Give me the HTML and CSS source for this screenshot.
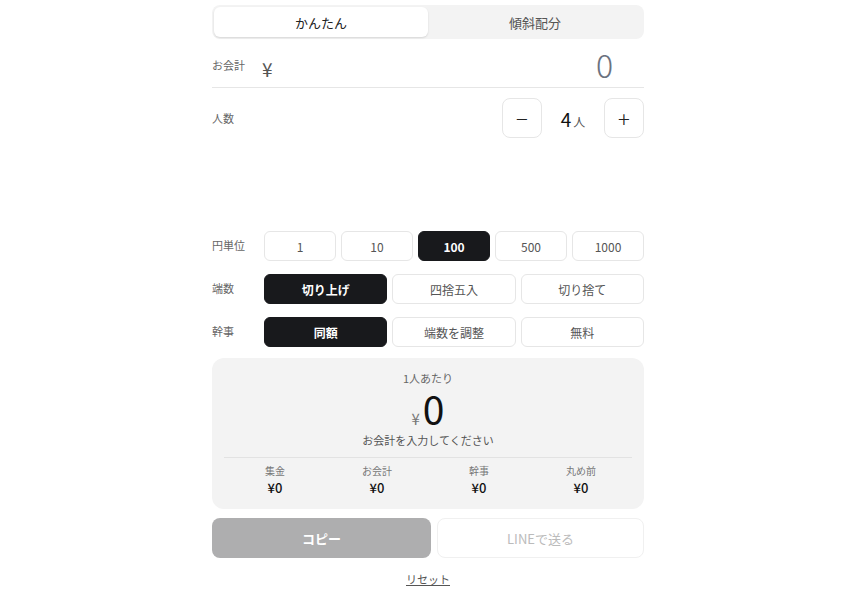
FILE: index.html
```html
<!DOCTYPE html>
<html lang="ja">
<head>
<meta charset="utf-8">
<title>割り勘</title>
<link rel="stylesheet" href="styles.css">
</head>
<body>
<main class="app">
  <div class="tabs">
    <button class="tab tab-active">かんたん</button>
    <button class="tab">傾斜配分</button>
  </div>

  <div class="amount-row">
    <span class="label">お会計</span>
    <span class="yen">¥</span>
    <span class="amount">0</span>
  </div>

  <div class="people-row">
    <span class="label">人数</span>
    <div class="stepper">
      <button class="step-btn">−</button>
      <span class="count"><span class="count-num">4</span><span class="count-unit">人</span></span>
      <button class="step-btn">+</button>
    </div>
  </div>

  <div class="options">
    <div class="opt-row">
      <span class="label">円単位</span>
      <div class="opt-group five">
        <button class="opt">1</button>
        <button class="opt">10</button>
        <button class="opt opt-on">100</button>
        <button class="opt">500</button>
        <button class="opt">1000</button>
      </div>
    </div>
    <div class="opt-row">
      <span class="label">端数</span>
      <div class="opt-group three">
        <button class="opt opt-on">切り上げ</button>
        <button class="opt">四捨五入</button>
        <button class="opt">切り捨て</button>
      </div>
    </div>
    <div class="opt-row">
      <span class="label">幹事</span>
      <div class="opt-group three">
        <button class="opt opt-on">同額</button>
        <button class="opt">端数を調整</button>
        <button class="opt">無料</button>
      </div>
    </div>
  </div>

  <section class="result">
    <div class="per-label">1人あたり</div>
    <div class="per-amount"><span class="per-yen">¥</span><span class="per-num">0</span></div>
    <div class="per-note">お会計を入力してください</div>
    <div class="stats">
      <div class="stat"><div class="stat-label">集金</div><div class="stat-val">¥0</div></div>
      <div class="stat"><div class="stat-label">お会計</div><div class="stat-val">¥0</div></div>
      <div class="stat"><div class="stat-label">幹事</div><div class="stat-val">¥0</div></div>
      <div class="stat"><div class="stat-label">丸め前</div><div class="stat-val">¥0</div></div>
    </div>
  </section>

  <div class="actions">
    <button class="copy">コピー</button>
    <button class="line">LINEで送る</button>
  </div>

  <div class="reset-wrap"><a class="reset" href="#">リセット</a></div>
</main>
</body>
</html>
```

FILE: styles.css
```css
* { box-sizing: border-box; }
html, body { margin: 0; padding: 0; background: #fff; }
body {
  font-family: "Noto Sans CJK JP", "Noto Sans", sans-serif;
  color: #111;
  padding-left: 2px;
}
button { font-family: inherit; cursor: pointer; }

.app {
  width: 432px;
  margin: 0 auto;
  padding-top: 5px;
}

.tabs {
  display: grid;
  grid-template-columns: 1fr 1fr;
  height: 34px;
  padding: 2px;
  background: #f3f3f3;
  border-radius: 8px;
}
.tab {
  border: 0;
  background: transparent;
  font-size: 13px;
  color: #555;
  border-radius: 6px;
  padding: 0;
}
.tab-active {
  background: #fff;
  color: #222;
  box-shadow: 0 1px 2px rgba(0,0,0,0.12);
}

.label {
  width: 50px;
  flex: none;
  font-size: 11px;
  color: #666;
}

.amount-row {
  display: flex;
  align-items: center;
  height: 49px;
  border-bottom: 1px solid #e6e6e6;
  padding-right: 31px;
}
.amount-row .label { padding-top: 4px; }
.yen {
  font-size: 19px;
  color: #555;
  padding-top: 10px;
}
.amount {
  margin-left: auto;
  padding-top: 2px;
  font-size: 32px;
  font-weight: 300;
  color: #6b7280;
  line-height: 1;
}

.people-row {
  display: flex;
  align-items: center;
  margin-top: 10px;
  height: 40px;
}
.stepper {
  margin-left: auto;
  display: flex;
  align-items: center;
}
.step-btn {
  width: 40px;
  height: 40px;
  border: 1px solid #e6e6e6;
  border-radius: 8px;
  background: #fff;
  font-size: 22px;
  font-weight: 300;
  color: #222;
  padding: 0;
  line-height: 1;
}
.count {
  width: 62px;
  text-align: center;
}
.count-num { font-size: 19px; color: #111; }
.count-unit { font-size: 12px; color: #555; margin-left: 2px; }

.options {
  margin-top: 93px;
  display: flex;
  flex-direction: column;
  gap: 13px;
}
.opt-row {
  display: flex;
  align-items: center;
  height: 30px;
}
.opt-row .label { width: 52px; margin-top: -2px; }
.opt-group {
  flex: 1;
  display: grid;
  gap: 5px;
  height: 30px;
}
.opt-group.five { grid-template-columns: repeat(5, 1fr); }
.opt-group.three { grid-template-columns: repeat(3, 1fr); }
.opt {
  border: 1px solid #e6e6e6;
  border-radius: 6px;
  background: #fff;
  font-size: 12px;
  color: #555;
  padding: 0;
}
.opt-on {
  background: #18191c;
  border-color: #18191c;
  color: #fff;
  font-weight: 700;
}

.result {
  margin-top: 11px;
  background: #f3f3f3;
  border-radius: 12px;
  padding: 12px 12px 11px;
  text-align: center;
}
.per-label {
  font-size: 11px;
  line-height: 16px;
  color: #666;
}
.per-amount {
  height: 44px;
  display: flex;
  justify-content: center;
  align-items: baseline;
  line-height: 44px;
}
.per-yen { font-size: 15px; color: #777; margin-right: 3px; }
.per-num { font-size: 39px; color: #111; }
.per-note {
  font-size: 11px;
  line-height: 18px;
  color: #555;
  margin-top: 1px;
}
.stats {
  margin-top: 8px;
  border-top: 1px solid #e2e2e2;
  padding-top: 6px;
  display: grid;
  grid-template-columns: repeat(4, 1fr);
}
.stat-label {
  font-size: 10px;
  line-height: 14px;
  color: #777;
}
.stat-val {
  font-size: 13px;
  line-height: 20px;
  font-weight: 500;
  color: #111;
}

.actions {
  margin-top: 9px;
  display: grid;
  grid-template-columns: 219px 1fr;
  gap: 6px;
  height: 40px;
}
.copy {
  border: 0;
  border-radius: 8px;
  background: #aeaeaf;
  color: #fff;
  font-size: 13px;
  font-weight: 700;
}
.line {
  border: 1px solid #f0f0f0;
  border-radius: 8px;
  background: #fff;
  color: #bbb;
  font-size: 13px;
}

.reset-wrap {
  text-align: center;
  margin-top: 7px;
}
.reset {
  font-size: 11px;
  color: #555;
  text-decoration: underline;
}
```
